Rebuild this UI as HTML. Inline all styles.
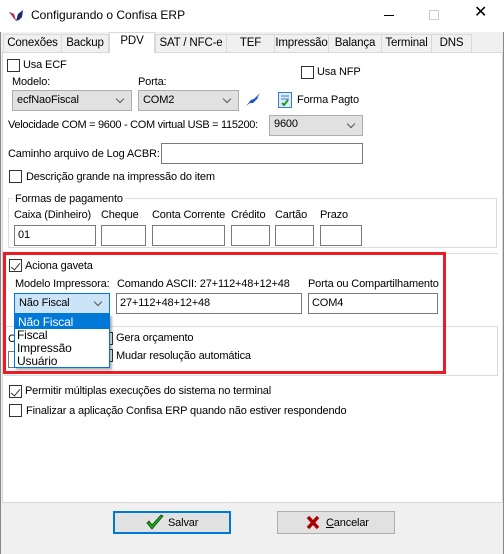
<!DOCTYPE html>
<html><head><meta charset="utf-8"><style>
*{box-sizing:border-box;margin:0;padding:0}
body{width:504px;height:554px;background:#f0f0f0;font-family:"Liberation Sans",sans-serif;font-size:11px;letter-spacing:-0.15px;color:#000;position:relative;overflow:hidden}
.a{position:absolute;white-space:nowrap}
.t{position:absolute;white-space:nowrap;line-height:14px}
.cb{position:absolute;width:13px;height:13px;border:1px solid #333;background:#fff}
.inp{position:absolute;border:1px solid #7a7a7a;background:#fff;padding-left:3px;line-height:18px}
.cmb{position:absolute;border:1px solid #adadad;background:#e1e1e1;padding-left:4px;line-height:18px}
.cmb:after{content:"";position:absolute;right:8px;top:5px;width:5px;height:5px;border-right:1px solid #555;border-bottom:1px solid #555;transform:rotate(45deg)}
.tab{position:absolute;top:34px;height:18px;border:1px solid #d9d9d9;border-bottom:none;background:#f0f0f0;text-align:center;line-height:17px;font-size:11.5px}
.chk:before{content:"";position:absolute;left:3px;top:1px;width:4px;height:8px;border-right:1.5px solid #333;border-bottom:1.5px solid #333;transform:rotate(40deg)}
</style></head><body>
<div class="a" style="left:0;top:0;width:504px;height:32px;background:#fff"></div>
<svg class="a" style="left:8px;top:8px" width="16" height="14"><path d="M1 4 L6 6 L8 13 L10 6 L15 2 L14 9 L11 12 L8 13 Z" fill="#1c2a6e"/><path d="M1 4 L6 6 L8 13 Z" fill="#c0304a"/></svg>
<div class="t" style="left:31px;top:8px;font-size:12px;letter-spacing:0">Configurando o Confisa ERP</div>
<div class="a" style="left:384px;top:15px;width:10px;height:1px;background:#000"></div>
<div class="a" style="left:429px;top:10px;width:10px;height:10px;border:1px solid #ccc"></div>
<div class="t" style="left:474px;top:6px;font-size:16px;font-weight:300">✕</div>
<div class="a" style="left:0;top:32px;width:1px;height:522px;background:#888"></div>
<div class="a" style="left:503px;top:32px;width:1px;height:522px;background:#888"></div>

<div class="tab" style="left:3px;width:59px">Conexões</div>
<div class="tab" style="left:61px;width:48px">Backup</div>
<div class="tab" style="left:155px;width:72px">SAT / NFC-e</div>
<div class="tab" style="left:226px;width:49px">TEF</div>
<div class="tab" style="left:274px;width:55px">Impressão</div>
<div class="tab" style="left:328px;width:54px">Balança</div>
<div class="tab" style="left:381px;width:51px">Terminal</div>
<div class="tab" style="left:431px;width:41px">DNS</div>
<div class="a" style="left:2px;top:52px;width:501px;height:451px;background:#fff;border:1px solid #d9d9d9"></div>
<div class="tab" style="left:109px;top:32px;width:46px;height:21px;background:#fff;line-height:16px;z-index:2">PDV</div>

<div class="cb" style="left:7px;top:59px"></div><div class="t" style="left:23px;top:58px">Usa ECF</div>
<div class="cb" style="left:301px;top:66px"></div><div class="t" style="left:317px;top:65px">Usa NFP</div>
<div class="t" style="left:12px;top:75px">Modelo:</div>
<div class="t" style="left:138px;top:75px">Porta:</div>
<div class="cmb" style="left:12px;top:90px;width:120px;height:21px">ecfNaoFiscal</div>
<div class="cmb" style="left:138px;top:90px;width:101px;height:21px">COM2</div>
<svg class="a" style="left:245px;top:92px" width="17" height="15"><path d="M1 14 L6 8 L9 7 L15 1 L12 6 L14 5 L8 11 L5 11 Z" fill="#1b4fc4"/></svg>
<svg class="a" style="left:278px;top:92px" width="14" height="16"><rect x="0.5" y="0.5" width="13" height="15" fill="#dfeefc" stroke="#3a7bd5"/><path d="M3 4h8M3 7h8" stroke="#3a7bd5"/><path d="M4 11 L6 13 L10 8" stroke="#1a9a1a" stroke-width="2" fill="none"/></svg>
<div class="t" style="left:297px;top:93px">Forma Pagto</div>
<div class="t" style="left:8px;top:118px;letter-spacing:-0.3px">Velocidade COM = 9600 - COM virtual USB = 115200:</div>
<div class="cmb" style="left:269px;top:115px;width:94px;height:21px;line-height:17px">9600</div>
<div class="t" style="left:8px;top:147px">Caminho arquivo de Log ACBR:</div>
<div class="inp" style="left:161px;top:143px;width:202px;height:21px"></div>
<div class="cb" style="left:9px;top:170px"></div><div class="t" style="left:26px;top:170px">Descrição grande na impressão do item</div>
<div class="a" style="left:8px;top:198px;width:489px;height:50px;border:1px solid #dcdcdc"></div>
<div class="t" style="left:13px;top:192px;background:#fff;padding:0 2px">Formas de pagamento</div>
<div class="t" style="left:14px;top:208px">Caixa (Dinheiro)</div>
<div class="t" style="left:101px;top:208px">Cheque</div>
<div class="t" style="left:152px;top:208px">Conta Corrente</div>
<div class="t" style="left:231px;top:208px">Crédito</div>
<div class="t" style="left:275px;top:208px">Cartão</div>
<div class="t" style="left:320px;top:208px">Prazo</div>
<div class="inp" style="left:14px;top:225px;width:82px;height:21px">01</div>
<div class="inp" style="left:101px;top:225px;width:45px;height:21px"></div>
<div class="inp" style="left:152px;top:225px;width:73px;height:21px"></div>
<div class="inp" style="left:231px;top:225px;width:39px;height:21px"></div>
<div class="inp" style="left:275px;top:225px;width:39px;height:21px"></div>
<div class="inp" style="left:320px;top:225px;width:42px;height:21px"></div>

<div class="a" style="left:3px;top:253px;width:495px;height:1px;background:#dcdcdc"></div>
<div class="a" style="left:4px;top:326px;width:494px;height:50px;border:1px solid #dcdcdc"></div>
<div class="t" style="left:8px;top:332px">C</div>
<div class="a" style="left:8px;top:351px;width:82px;height:17px;border:1px solid #7a7a7a"></div>
<div class="cb" style="left:100px;top:332px"></div><div class="t" style="left:116px;top:331px">Gera orçamento</div>
<div class="cb" style="left:100px;top:349px"></div><div class="t" style="left:116px;top:349px">Mudar resolução automática</div>

<div class="cb chk" style="left:9px;top:259px"></div><div class="t" style="left:25px;top:259px">Aciona gaveta</div>
<div class="t" style="left:15px;top:277px">Modelo Impressora:</div>
<div class="t" style="left:117px;top:277px">Comando ASCII: 27+112+48+12+48</div>
<div class="t" style="left:308px;top:277px">Porta ou Compartilhamento</div>
<div class="cmb" style="left:14px;top:293px;width:96px;height:21px;background:#cce4f7;border-color:#0078d7;line-height:19px">Não Fiscal</div>
<div class="inp" style="left:116px;top:293px;width:186px;height:21px">27+112+48+12+48</div>
<div class="inp" style="left:308px;top:293px;width:130px;height:21px">COM4</div>
<div class="a" style="left:14px;top:314px;width:96px;height:54px;background:#fff;border:1px solid #0078d7;box-shadow:2px 2px 2px rgba(0,0,0,.3);z-index:3;font-size:12px">
<div style="background:#0078d7;color:#fff;height:14px;line-height:14px;padding-left:3px">Não Fiscal</div>
<div style="height:13px;line-height:13px;padding-left:2px">Fiscal</div>
<div style="height:13px;line-height:13px;padding-left:2px">Impressão</div>
<div style="height:13px;line-height:13px;padding-left:2px">Usuário</div></div>
<div class="a" style="left:3px;top:252px;width:443px;height:122px;border:3px solid #ed1c24;z-index:4"></div>

<div class="cb chk" style="left:9px;top:385px"></div><div class="t" style="left:25px;top:384px">Permitir múltiplas execuções do sistema no terminal</div>
<div class="cb" style="left:9px;top:404px"></div><div class="t" style="left:26px;top:404px">Finalizar a aplicação Confisa ERP quando não estiver respondendo</div>

<div class="a" style="left:113px;top:511px;width:118px;height:23px;border:2px solid #0078d7;background:#e1e1e1"></div>
<svg class="a" style="left:146px;top:514px" width="18" height="17"><path d="M1 9 L6 15 L17 2 L15 1 L6 11 L3 7 Z" fill="#18b018" stroke="#0a400a" stroke-width="0.8"/></svg>
<div class="t" style="left:168px;top:516px">Salvar</div>
<div class="a" style="left:277px;top:511px;width:118px;height:23px;border:1px solid #adadad;background:#e1e1e1"></div>
<svg class="a" style="left:306px;top:515px" width="14" height="15"><path d="M2 2 L12 13 M12 2 L2 13" stroke="#a00" stroke-width="3.5"/></svg>
<div class="t" style="left:326px;top:516px"><u>C</u>ancelar</div>
</body></html>
